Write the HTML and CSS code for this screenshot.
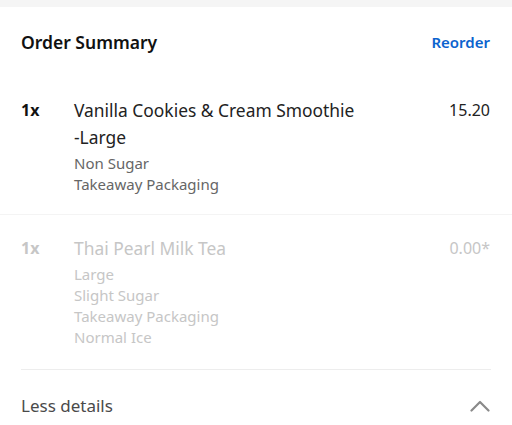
FILE: index.html
```html
<!DOCTYPE html>
<html>
<head>
<meta charset="utf-8">
<link rel="stylesheet" href="styles.css">
</head>
<body>
<div class="topbar"></div>
<section class="summary">
  <header class="summary-header">
    <h2 class="title">Order Summary</h2>
    <a class="reorder">Reorder</a>
  </header>
  <div class="item">
    <div class="qty">1x</div>
    <div class="info">
      <div class="name">Vanilla Cookies &amp; Cream Smoothie <span class="nowrap">-Large</span></div>
      <div class="options">
        <div>Non Sugar</div>
        <div>Takeaway Packaging</div>
      </div>
    </div>
    <div class="price">15.20</div>
  </div>
  <div class="item item-muted">
    <div class="qty">1x</div>
    <div class="info">
      <div class="name">Thai Pearl Milk Tea</div>
      <div class="options">
        <div>Large</div>
        <div>Slight Sugar</div>
        <div>Takeaway Packaging</div>
        <div>Normal Ice</div>
      </div>
    </div>
    <div class="price">0.00*</div>
  </div>
  <div class="toggle">
    <span class="toggle-label">Less details</span>
    <svg class="chevron" width="20" height="12" viewBox="0 0 20 12"><path d="M1.5 10.5 L10 2 L18.5 10.5" fill="none" stroke="#8a8a8a" stroke-width="2.2" stroke-linecap="round" stroke-linejoin="round"/></svg>
  </div>
</section>
</body>
</html>
```

FILE: styles.css
```css
* { box-sizing: border-box; }
body {
  margin: 0;
  background: #fff;
  font-family: "Noto Sans", "Open Sans", sans-serif;
  color: #1a1a1a;
}
.topbar {
  height: 7px;
  background: #f5f5f5;
}
.summary-header {
  display: flex;
  justify-content: space-between;
  align-items: center;
  padding: 24px 22px 0 21px;
}
.title {
  margin: 0;
  font-size: 17.5px;
  font-weight: 600;
  line-height: 22px;
  color: #111;
}
.reorder {
  font-size: 15px;
  font-weight: 600;
  color: #0b63ce;
  line-height: 22px;
}
.item {
  display: flex;
  padding: 44px 22px 19px 21px;
  border-bottom: 1px solid #f4f4f4;
}
.item-muted {
  padding-top: 20px;
  padding-bottom: 21px;
  border-bottom: none;
}
.qty {
  width: 53px;
  flex: none;
  font-size: 16px;
  font-weight: 700;
  line-height: 27px;
  color: #111;
}
.info {
  flex: 1;
}
.name {
  font-size: 17.4px;
  line-height: 27px;
  color: #222;
  max-width: 300px;
}
.nowrap { white-space: nowrap; }
.options {
  margin-top: 2px;
  font-size: 15px;
  line-height: 21px;
  color: #666;
}
.price {
  font-size: 16px;
  line-height: 27px;
  color: #222;
}
.item-muted .qty,
.item-muted .name,
.item-muted .options,
.item-muted .price {
  color: #c6c6c6;
}
.item-muted .options { margin-top: 2px; }
.toggle {
  display: flex;
  justify-content: space-between;
  align-items: center;
  margin: 0 21px;
  padding: 24px 1px 0 0;
  border-top: 1px solid #ededed;
}
.toggle-label {
  font-size: 17px;
  line-height: 24px;
  color: #4a4a4a;
}
.chevron {
  display: block;
}
```
